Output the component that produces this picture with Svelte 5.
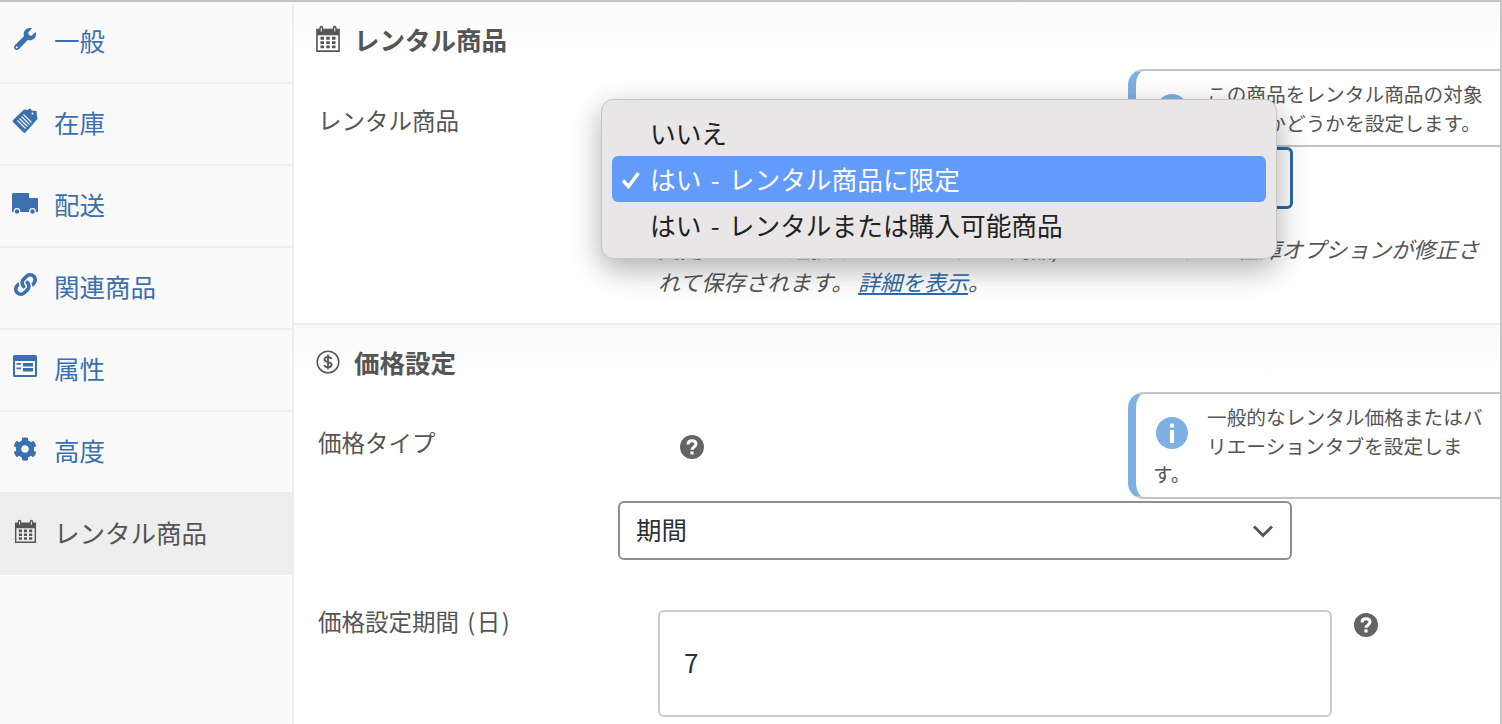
<script>
  const tabs = [
    { name: '一般', icon: 'wrench' },
    { name: '在庫', icon: 'tag' },
    { name: '配送', icon: 'truck' },
    { name: '関連商品', icon: 'link' },
    { name: '属性', icon: 'list' },
    { name: '高度', icon: 'gear' },
    { name: 'レンタル商品', icon: 'calendar', active: true }
  ]
</script>

{#snippet calendar()}
  <svg class="ic-cal" viewBox="0 0 24 26" aria-hidden="true">
    <path fill="currentColor" fill-rule="evenodd" d="M1 3.500h3V2.500a1.800 1.800 0 0 1 3.600 0v1h8.800v-1a1.800 1.800 0 0 1 3.600 0v1h3V25H1zM2.500 9.500V23.500h19V9.500z"/>
    <path fill="#fff" opacity=".75" d="M5.200 2.500h1.200V6H5.200zM17.600 2.500h1.200V6h-1.200z"/>
    <path fill="currentColor" d="M5 11h3.300v2.700H5zM10.350 11h3.300v2.700h-3.300zM15.700 11H19v2.700h-3.300zM5 15h3.300v2.700H5zM10.350 15h3.300v2.700h-3.300zM15.700 15H19v2.700h-3.300zM5 19h3.300v2.700H5zM10.350 19h3.300v2.700h-3.300zM15.700 19H19v2.700h-3.300z"/>
  </svg>
{/snippet}

{#snippet help()}
  <svg class="help" viewBox="0 0 24 24" aria-hidden="true">
    <circle cx="12" cy="12" r="12" fill="#646464"/>
    <path fill="none" stroke="#fff" stroke-width="3" d="M8 9.500c0-2.400 1.800-3.700 4-3.700s4 1.200 4 3.300c0 2.900-4 2.800-4 5.700"/>
    <rect x="10.400" y="16.400" width="3.200" height="3.100" fill="#fff"/>
  </svg>
{/snippet}

{#snippet info()}
  <svg class="info" viewBox="0 0 32 32" aria-hidden="true">
    <circle cx="16" cy="16" r="16" fill="#7fb0e3"/>
    <rect x="14" y="6.500" width="4" height="4" rx="1" fill="#fff"/>
    <rect x="14" y="13" width="4" height="13" fill="#fff"/>
  </svg>
{/snippet}

<div class="page">
  <nav class="tabs">
    {#each tabs as t}
      <div class="tab" class:active={t.active}>
        <span class="tab-icon">
          {#if t.icon === 'wrench'}
            <svg class="ic-wrench" viewBox="0 0 512 512" aria-hidden="true"><path fill="currentColor" d="M507.730 109.100c-2.240-9.030-13.540-12.090-20.120-5.510l-74.360 74.360-67.880-11.310-11.310-67.880 74.360-74.360c6.620-6.620 3.430-17.900-5.660-20.160-47.380-11.740-99.550.91-136.580 37.930-39.640 39.640-50.550 97.100-34.050 147.200L18.740 402.760c-24.990 24.990-24.990 65.510 0 90.500 24.990 24.990 65.510 24.990 90.500 0l213.210-213.210c50.120 16.710 107.470 5.680 147.370-34.220 37.070-37.070 49.700-89.320 37.910-136.730zM64 472c-13.250 0-24-10.750-24-24 0-13.260 10.750-24 24-24s24 10.740 24 24c0 13.250-10.750 24-24 24z"/></svg>
          {:else if t.icon === 'tag'}
            <svg class="ic-tag" viewBox="0 0 26 26" aria-hidden="true">
              <path fill="currentColor" d="M12 1.500 16 2l1-1.500 2 .500.500 1.500 5 .500.500 5 .500 3L13.500 24.500a1.500 1.500 0 0 1-2 0L1 14a1.500 1.500 0 0 1 0-2z"/>
              <path fill="none" stroke="#fafafa" stroke-width="1.100" d="M5.500 12.500l8 8M7.500 10.500l8 8M9.500 8.500l8 8M11.500 6.500l8 8"/>
              <circle cx="20.500" cy="5.500" r="1" fill="#fafafa"/>
            </svg>
          {:else if t.icon === 'truck'}
            <svg class="ic-truck" viewBox="0 0 26 22" aria-hidden="true">
              <path fill="currentColor" d="M0 1.500A1.500 1.500 0 0 1 1.500 0H17v5h8a1 1 0 0 1 1 1v13H0z"/>
              <circle cx="5" cy="18.500" r="3.400" fill="#fafafa"/>
              <circle cx="20.500" cy="18.500" r="3.400" fill="#fafafa"/>
              <circle cx="5" cy="18.500" r="2.200" fill="currentColor"/>
              <circle cx="20.500" cy="18.500" r="2.200" fill="currentColor"/>
            </svg>
          {:else if t.icon === 'link'}
            <svg class="ic-link" viewBox="0 0 512 512" aria-hidden="true"><path fill="currentColor" d="M326.612 185.391c59.747 59.809 58.927 155.698.36 214.590-.11.12-.24.25-.36.37l-67.200 67.200c-59.270 59.270-155.699 59.262-214.960 0-59.270-59.260-59.270-155.700 0-214.960l37.106-37.106c9.840-9.840 26.786-3.300 27.294 10.606.648 17.722 3.826 35.527 9.690 52.721 1.986 5.822.567 12.262-3.783 16.612l-13.087 13.087c-28.026 28.026-28.905 73.660-1.155 101.960 28.024 28.579 74.086 28.749 102.325.51l67.200-67.190c28.191-28.191 28.073-73.757 0-101.830-3.701-3.694-7.429-6.564-10.341-8.569a16.037 16.037 0 0 1-6.947-12.606c-.396-10.567 3.348-21.456 11.698-29.806l21.054-21.055c5.521-5.521 14.182-6.199 20.584-1.731a152.482 152.482 0 0 1 20.522 17.197zM467.547 44.449c-59.261-59.262-155.690-59.270-214.960 0l-67.200 67.200c-.12.12-.25.25-.36.37-58.566 58.892-59.387 154.781.36 214.590a152.454 152.454 0 0 0 20.521 17.196c6.402 4.468 15.064 3.789 20.584-1.731l21.054-21.055c8.350-8.350 12.094-19.239 11.698-29.806a16.037 16.037 0 0 0-6.947-12.606c-2.912-2.005-6.640-4.875-10.341-8.569-28.073-28.073-28.191-73.639 0-101.830l67.200-67.190c28.239-28.239 74.300-28.069 102.325.51 27.750 28.300 26.872 73.934-1.155 101.960l-13.087 13.087c-4.350 4.350-5.769 10.790-3.783 16.612 5.864 17.194 9.042 34.999 9.690 52.721.509 13.906 17.454 20.446 27.294 10.606l37.106-37.106c59.271-59.259 59.271-155.699.001-214.959z"/></svg>
          {:else if t.icon === 'list'}
            <svg class="ic-list" viewBox="0 0 24 22" aria-hidden="true">
              <path fill="currentColor" fill-rule="evenodd" d="M1.500 0h21A1.500 1.500 0 0 1 24 1.500v19a1.500 1.500 0 0 1-1.500 1.500h-21A1.500 1.500 0 0 1 0 20.500v-19A1.500 1.500 0 0 1 1.500 0zM2 6v14h20V6z"/>
              <path fill="currentColor" d="M3.500 8H8v1.800H3.500zM3.500 12.500H8v1.800H3.500zM10 8h10v3.500H10zM10 13h10v3.500H10z"/>
            </svg>
          {:else if t.icon === 'gear'}
            <svg class="ic-gear" viewBox="0 0 512 512" aria-hidden="true"><path fill="currentColor" d="M487.400 315.700l-42.600-24.600c4.300-23.200 4.300-47 0-70.200l42.600-24.600c4.900-2.800 7.100-8.600 5.500-14-11.100-35.600-30-67.800-54.700-94.600-3.800-4.100-10-5.100-14.800-2.300L380.800 110c-17.900-15.400-38.500-27.300-60.800-35.100V25.800c0-5.600-3.900-10.500-9.400-11.700-36.700-8.200-74.300-7.800-109.200 0-5.500 1.200-9.400 6.100-9.400 11.700V75c-22.200 7.900-42.800 19.800-60.800 35.100L88.700 85.500c-4.900-2.800-11-1.900-14.800 2.300-24.700 26.700-43.600 58.900-54.700 94.600-1.700 5.400.6 11.200 5.500 14L67.300 221c-4.300 23.200-4.300 47 0 70.200l-42.600 24.600c-4.900 2.800-7.100 8.600-5.500 14 11.100 35.600 30 67.800 54.700 94.600 3.800 4.100 10 5.100 14.800 2.300l42.600-24.600c17.900 15.400 38.500 27.300 60.800 35.100v49.200c0 5.600 3.900 10.500 9.400 11.700 36.700 8.200 74.300 7.800 109.200 0 5.500-1.200 9.400-6.100 9.400-11.700v-49.200c22.200-7.900 42.800-19.800 60.800-35.100l42.600 24.600c4.900 2.800 11 1.900 14.800-2.300 24.700-26.700 43.600-58.900 54.700-94.600 1.500-5.500-.7-11.300-5.600-14.100zM256 336c-44.100 0-80-35.900-80-80s35.900-80 80-80 80 35.900 80 80-35.900 80-80 80z"/></svg>
          {:else}
            {@render calendar()}
          {/if}
        </span>
        <span class="tab-name">{t.name}</span>
      </div>
    {/each}
  </nav>

  <main class="panel">
    <section class="sec first">
      <h2 class="head">
        <span class="head-icon">{@render calendar()}</span>
        <span>レンタル商品</span>
      </h2>
      <div class="field">
        <div class="label">レンタル商品</div>
        <div class="control">
          <div class="tip">
            {@render info()}
            この商品をレンタル商品の対象にするかどうかを設定します。
          </div>
          <div class="select-wrap">
            <div class="select focus">はい - レンタル商品に限定</div>
            <div class="popup">
              <div class="opt">いいえ</div>
              <div class="opt on">
                <svg class="check" viewBox="0 0 20 18" aria-hidden="true"><path fill="none" stroke="#fff" stroke-width="3.400" d="M2 9.500l5.500 6L17.500 2"/></svg>
                はい - レンタル商品に限定
              </div>
              <div class="opt">はい - レンタルまたは購入可能商品</div>
            </div>
          </div>
          <p class="desc">変更すると、選択したオプションと商品/バリエーションの在庫オプションが修正されて保存されます。 <a href="#top">詳細を表示</a>。</p>
        </div>
      </div>
    </section>

    <section class="sec">
      <h2 class="head">
        <span class="head-icon">
          <svg class="ic-dollar" viewBox="0 0 24 24" aria-hidden="true">
            <circle cx="12" cy="12" r="10.800" fill="none" stroke="currentColor" stroke-width="1.500"/>
            <path fill="none" stroke="currentColor" stroke-width="1.800" d="M15.500 9c-.5-1.500-1.800-2.200-3.500-2.200-2 0-3.500 1-3.500 2.600 0 3.500 7.200 1.800 7.200 5.200 0 1.700-1.600 2.700-3.700 2.700-1.800 0-3.200-.8-3.700-2.300M12 4.500v15"/>
          </svg>
        </span>
        <span>価格設定</span>
      </h2>
      <div class="field">
        <div class="label label-b">価格タイプ</div>
        <div class="control">
          <div class="tip-row">
            <span class="help-a">{@render help()}</span>
            <div class="tip">
              {@render info()}
              一般的なレンタル価格またはバリエーションタブを設定します。
            </div>
          </div>
          <div class="select">
            期間
            <svg class="chev" viewBox="0 0 22 14" aria-hidden="true"><path fill="none" stroke="#50575e" stroke-width="3" d="M2 2.500l9 9 9-9"/></svg>
          </div>
        </div>
      </div>
      <div class="field field-days">
        <div class="label">価格設定期間 <span class="unit">(日)</span></div>
        <div class="control input-row">
          <div class="input">7</div>
          {@render help()}
        </div>
      </div>
    </section>
  </main>
</div>

<style>
  :global(body) {
    margin: 0;
    background: #fff;
  }

  .page {
    display: flex;
    width: 1502px;
    height: 724px;
    box-sizing: border-box;
    border-top: 2px solid #c3c4c7;
    overflow: hidden;
    font-family: "Noto Sans CJK JP", "Noto Sans", sans-serif;
    color: #555;
  }

  .tabs {
    flex: 0 0 294px;
    box-sizing: border-box;
    background: #fafafa;
    border-right: 2px solid #eee;
  }

  .tab {
    display: flex;
    align-items: center;
    height: 82px;
    padding-bottom: 6px;
    box-sizing: border-box;
    border-bottom: 2px solid #eee;
    color: #3a70b0;
    font-size: 25.500px;
  }

  .tab:nth-child(6) {
    border-bottom: 0;
    height: 80px;
  }

  .tab.active {
    height: 83px;
    padding-bottom: 4px;
    background: #eee;
    border-bottom: 0;
    color: #555;
  }

  .tab-icon {
    flex: 0 0 55px;
    display: flex;
    justify-content: center;
    padding-right: 5px;
    box-sizing: border-box;
  }

  .tab-name {
    margin-left: -1px;
  }

  .ic-wrench { width: 22px; height: 22px; }
  .ic-tag { width: 26px; height: 26px; }
  .ic-truck { width: 26px; height: 22px; margin-top: 2px; }
  .ic-link { width: 23px; height: 23px; margin-top: -2px; }
  .ic-list { width: 24px; height: 22px; margin-top: -2px; }
  .ic-gear { width: 24px; height: 24px; }
  .ic-cal { width: 23px; height: 25px; }
  .head .ic-cal { width: 26px; height: 28px; margin-left: -1px; }

  .panel {
    flex: 1;
    min-width: 0;
    border-right: 2px solid #c3c4c7;
    overflow: hidden;
  }

  .sec.first {
    border-bottom: 2px solid #eee;
    padding-bottom: 25px;
  }

  .head {
    display: flex;
    align-items: center;
    height: 67px;
    margin: 0;
    padding: 7px 0 0 22px;
    box-sizing: border-box;
    background: linear-gradient(#fafafa, #fff);
    font-size: 25.500px;
    font-weight: 700;
    line-height: 1;
    color: #555;
  }

  .head-icon {
    display: flex;
    width: 38px;
  }

  .ic-dollar {
    width: 24px;
    height: 24px;
  }

  .field {
    display: flex;
  }

  .label {
    flex: 0 0 324px;
    box-sizing: border-box;
    padding: 36px 0 0 24px;
    font-size: 23.500px;
    line-height: 30px;
  }

  .label-b {
    padding-top: 35px;
  }

  .unit {
    letter-spacing: 1.500px;
    margin-left: 3px;
  }

  .control {
    flex: 1;
    min-width: 0;
  }

  .tip {
    box-sizing: border-box;
    width: 372px;
    margin-left: 510px;
    padding: 9px 15px 8px 17px;
    background: #fff;
    border: 2px solid #c3c4c7;
    border-left: 8px solid #7fb0e3;
    border-right: 0;
    border-radius: 16px 0 0 16px;
    font-size: 19.700px;
    line-height: 28.500px;
  }

  .info {
    float: left;
    width: 32px;
    height: 32px;
    margin: 14px 19px 0 3px;
  }

  .tip-row {
    display: flex;
    align-items: center;
  }

  .tip-row .tip {
    margin-left: 424px;
    flex: none;
  }

  .help-a {
    display: flex;
    margin-left: 62px;
    margin-top: 4px;
  }

  .help {
    width: 24px;
    height: 24px;
    flex: none;
  }

  .select-wrap {
    position: relative;
  }

  .select {
    position: relative;
    box-sizing: border-box;
    width: 674px;
    height: 59px;
    margin-top: 2px;
    padding-left: 16px;
    border: 2px solid #8c8f94;
    border-radius: 6px;
    background: #fff;
    font-size: 25.500px;
    line-height: 51px;
    color: #2c3338;
  }

  .select.focus {
    width: 675px;
    height: 62px;
    margin-top: 0;
    border: 3px solid #2e68a6;
  }

  .chev {
    position: absolute;
    right: 16px;
    top: 21px;
    width: 22px;
    height: 14px;
  }

  .popup {
    position: absolute;
    left: -17px;
    top: -48px;
    width: 676px;
    height: 160px;
    box-sizing: border-box;
    padding: 10px 10px;
    background: #e8e6e7;
    border: 1px solid #c6c4c5;
    border-radius: 12px;
    box-shadow: 0 10px 30px rgba(0, 0, 0, .32);
    color: #222;
    font-size: 25.700px;
    word-spacing: 3.500px;
  }

  .opt {
    position: relative;
    height: 46px;
    padding-left: 38px;
    border-radius: 6px;
    line-height: 46px;
  }

  .opt.on {
    background: #629bf9;
    color: #fff;
  }

  .check {
    position: absolute;
    left: 9px;
    top: 15px;
    width: 20px;
    height: 18px;
  }

  .desc {
    margin: 23px 0 0 40px;
    width: 826px;
    font-size: 22px;
    font-style: italic;
    line-height: 33px;
  }

  .desc a {
    color: #2f6aa8;
  }

  .field-days {
    margin-top: 47px;
  }

  .field-days .label {
    padding-top: 0;
    margin-top: -1px;
  }

  .input-row {
    display: flex;
    align-items: flex-start;
    gap: 22px;
    padding-left: 40px;
  }

  .input-row .help {
    margin-top: 6px;
  }

  .input {
    box-sizing: border-box;
    width: 674px;
    height: 107px;
    margin-top: 3px;
    padding-left: 24px;
    border: 2px solid #ccc;
    border-radius: 6px;
    font-size: 26px;
    line-height: 99px;
    color: #2c3338;
  }
</style>
